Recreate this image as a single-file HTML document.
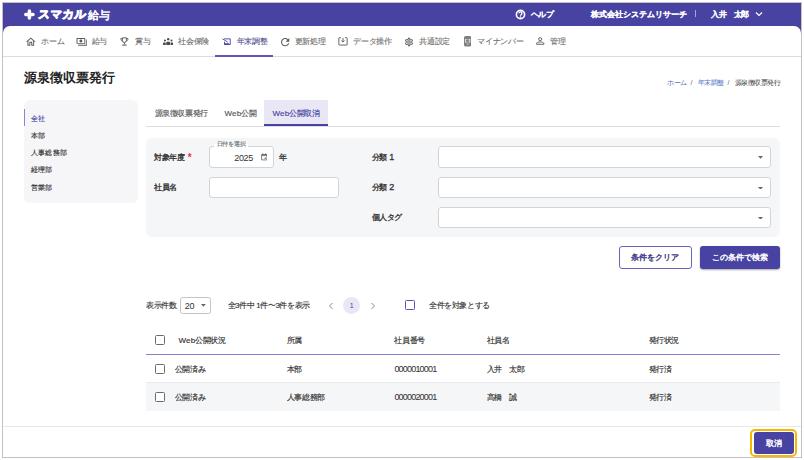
<!DOCTYPE html>
<html lang="ja">
<head>
<meta charset="utf-8">
<style>
*{box-sizing:border-box;margin:0;padding:0}
html,body{width:804px;height:460px;overflow:hidden;background:#fff}
body{font-family:"Liberation Sans",sans-serif;color:#333;position:relative}
.a{position:absolute;white-space:nowrap}
#frame{position:absolute;left:2px;top:2px;width:800px;height:456px;border:1px solid #c2c2c0;background:#4842a2;overflow:hidden}
#panel{position:absolute;left:3px;top:26px;width:798px;height:431px;background:#fff;border-radius:7px 7px 0 0}
.hdr{color:#fff;font-size:8px;font-weight:bold;line-height:12px;-webkit-text-stroke:0.25px #fff;letter-spacing:-0.4px}
.nav{font-size:8px;color:#707070;line-height:10px;-webkit-text-stroke:0.12px #707070;letter-spacing:-0.2px}
.ico{position:absolute}
.bc{top:78px;font-size:7px;line-height:9px;letter-spacing:-0.45px}
.t{font-size:8px;line-height:10px;color:#333;-webkit-text-stroke-width:0.15px;letter-spacing:-0.4px}
.sb{font-size:7px;letter-spacing:0.2px}
.b{-webkit-text-stroke-width:0.32px}
.box{position:absolute;background:#fff;border:1px solid #d3d4d7;border-radius:3px}
.cb{position:absolute;width:10px;height:10px;border:1.5px solid #6b6b6b;border-radius:1.5px;background:#fff}
.arr{position:absolute;width:0;height:0;border-left:2.6px solid transparent;border-right:2.6px solid transparent;border-top:2.8px solid #666}
</style>
</head>
<body>
<div id="frame"></div>
<div id="panel"></div>

<!-- ===== header ===== -->
<svg class="ico" style="left:24px;top:8.6px" width="11" height="11" viewBox="0 0 11 11"><path d="M5.4 1.9v7.2M1.8 5.5h7.2" stroke="#fff" stroke-width="3.5" stroke-linecap="round"/></svg>
<div class="a hdr" style="left:38px;top:5px;font-size:11.5px;font-weight:bold;line-height:18px;-webkit-text-stroke:0.9px #fff;transform:skewX(-6deg);letter-spacing:0.3px">スマカル</div>
<div class="a hdr" style="left:88px;top:6px;font-size:11px;font-weight:normal;-webkit-text-stroke:0.6px #fff;line-height:18px">給与</div>

<svg class="ico" style="left:515px;top:9px" width="11" height="11" viewBox="0 0 11 11"><circle cx="5.5" cy="5.5" r="4.1" fill="none" stroke="#fff" stroke-width="1.6"/><path d="M4 4.4a1.5 1.5 0 1 1 2.3 1.2c-.5.3-.8.6-.8 1.1" fill="none" stroke="#fff" stroke-width="1.3"/><circle cx="5.5" cy="8.1" r=".75" fill="#fff"/></svg>
<div class="a hdr" style="left:531px;top:9px;letter-spacing:-0.6px;font-weight:normal;-webkit-text-stroke:0.5px #fff">ヘルプ</div>
<div class="a hdr" style="left:591px;top:9px;letter-spacing:0;font-weight:normal;-webkit-text-stroke:0.6px #fff">株式会社システムリサーチ</div>
<div class="a" style="left:694.5px;top:10px;width:1.5px;height:7.4px;background:#a9a4d8"></div>
<div class="a hdr" style="left:711px;top:9px;font-weight:normal;-webkit-text-stroke:0.55px #fff">入井</div><div class="a hdr" style="left:733.5px;top:9px;font-weight:normal;-webkit-text-stroke:0.55px #fff">太郎</div>
<svg class="ico" style="left:755px;top:11px" width="8" height="6" viewBox="0 0 8 6"><path d="M1 1.5l3 3 3-3" fill="none" stroke="#fff" stroke-width="1.2"/></svg>

<!-- ===== nav ===== -->
<div class="a" style="left:3px;top:56px;width:798px;height:1px;background:#dcdcdc"></div>
<div class="a" style="left:215px;top:55px;width:58px;height:2px;background:#5e57b8"></div>

<svg class="ico" style="left:26.3px;top:36.5px" width="9.6" height="9.6" viewBox="2 2 20 20"><path fill="#5a5a5a" d="M12 5.69l5 4.5V18h-2v-6H9v6H7v-7.81l5-4.5M12 3L2 12h3v8h6v-6h2v6h6v-8h3L12 3z"/></svg>
<svg class="ico" style="left:75.5px;top:35.8px" width="11.8" height="11.8" viewBox="0 0 24 24"><path fill="#5a5a5a" d="M19 14V6c0-1.1-.9-2-2-2H3c-1.1 0-2 .9-2 2v8c0 1.1.9 2 2 2h14c1.1 0 2-.9 2-2zm-2 0H3V6h14v8zm-7-7c-1.66 0-3 1.34-3 3s1.34 3 3 3 3-1.34 3-3-1.34-3-3-3zm13 0v11c0 1.1-.9 2-2 2H4v-2h17V7h2z"/></svg>
<svg class="ico" style="left:120.3px;top:36.8px" width="8.8" height="9" viewBox="0 0 18 18"><g fill="none" stroke="#5a5a5a" stroke-width="1.9"><path d="M5 1.5h8v5.5a4 4 0 0 1-8 0z"/><path d="M5 3H1.8v1.5c0 1.8 1.4 3.3 3.4 3.5M13 3h3.2v1.5c0 1.8-1.4 3.3-3.4 3.5"/><path d="M9 11v4"/></g><path d="M4.5 15.3h9v2.2h-9z" fill="#5a5a5a"/></svg>
<svg class="ico" style="left:162.8px;top:37.8px" width="10.4" height="7.2" viewBox="0 0 20 14"><g fill="#4a4a4a"><circle cx="10" cy="2.3" r="2.3"/><circle cx="3.6" cy="5" r="2"/><circle cx="16.4" cy="5" r="2"/><path d="M6.3 14V9.2c0-1.1.7-1.9 1.8-1.9h3.8c1.1 0 1.8.8 1.8 1.9V14z"/><path d="M0 14v-3.6c0-1 .6-1.6 1.6-1.6h3.6v5.2zM20 14v-3.6c0-1-.6-1.6-1.6-1.6h-3.6v5.2z"/></g></svg>
<svg class="ico" style="left:221.5px;top:37.8px" width="9" height="7" viewBox="0 0 36 28"><g fill="none" stroke="#4842a2" stroke-width="3.6"><path d="M8 3.5h25v23H10V15"/><path d="M2 3.5l21 13"/></g><path d="M9 21h20v6H9z" fill="#4842a2"/></svg>
<svg class="ico" style="left:279.8px;top:36.5px" width="10.3" height="10.3" viewBox="2 2 20 20"><path fill="#5a5a5a" d="M17.65 6.35C16.2 4.9 14.21 4 12 4c-4.42 0-7.99 3.58-7.99 8s3.57 8 7.99 8c3.73 0 6.84-2.55 7.73-6h-2.08c-.82 2.33-3.04 4-5.65 4-3.31 0-6-2.69-6-6s2.69-6 6-6c1.66 0 3.14.69 4.22 1.78L13 11h7V4l-2.35 2.35z"/></svg>
<svg class="ico" style="left:338px;top:37px" width="10" height="8.8" viewBox="0 0 20 18"><g fill="none" stroke="#5a5a5a" stroke-width="1.9"><path d="M6 1.5H2.2c-.4 0-.7.3-.7.7v13.6c0 .4.3.7.7.7h15.6c.4 0 .7-.3.7-.7V2.2c0-.4-.3-.7-.7-.7H14"/><path d="M10 2v8M6.8 7.2L10 10.4l3.2-3.2"/></g></svg>
<svg class="ico" style="left:404.2px;top:36.5px" width="10" height="10" viewBox="0 0 24 24"><path fill="#5a5a5a" d="M19.43 12.98c.04-.32.07-.64.07-.98 0-.34-.03-.66-.07-.98l2.11-1.65c.19-.15.24-.42.12-.64l-2-3.46c-.09-.16-.26-.25-.44-.25-.06 0-.12.01-.17.03l-2.49 1c-.52-.4-1.08-.73-1.69-.98l-.38-2.65C14.46 2.18 14.25 2 14 2h-4c-.25 0-.46.18-.49.42l-.38 2.65c-.61.25-1.17.59-1.69.98l-2.49-1c-.06-.02-.12-.03-.18-.03-.17 0-.34.09-.43.25l-2 3.46c-.13.22-.07.49.12.64l2.11 1.65c-.04.32-.07.65-.07.98 0 .33.03.66.07.98l-2.11 1.65c-.19.15-.24.42-.12.64l2 3.46c.09.16.26.25.44.25.06 0 .12-.01.17-.03l2.49-1c.52.4 1.08.73 1.69.98l.38 2.65c.03.24.24.42.49.42h4c.25 0 .46-.18.49-.42l.38-2.65c.61-.25 1.17-.59 1.69-.98l2.49 1c.06.02.12.03.18.03.17 0 .34-.09.43-.25l2-3.46c.12-.22.07-.49-.12-.64l-2.11-1.65zm-1.98-1.71c.04.31.05.52.05.73 0 .21-.02.43-.05.73l-.14 1.13.89.7 1.08.84-.7 1.21-1.27-.51-1.04-.42-.9.68c-.43.32-.84.56-1.25.73l-1.06.43-.16 1.13-.2 1.35h-1.4l-.19-1.35-.16-1.13-1.06-.43c-.43-.18-.83-.41-1.23-.71l-.91-.7-1.06.43-1.27.51-.7-1.21 1.08-.84.89-.7-.14-1.13c-.03-.31-.05-.54-.05-.74s.02-.43.05-.73l.14-1.13-.89-.7-1.08-.84.7-1.21 1.27.51 1.04.42.9-.68c.43-.32.84-.56 1.25-.73l1.06-.43.16-1.13.2-1.35h1.39l.19 1.35.16 1.13 1.06.43c.43.18.83.41 1.23.71l.91.7 1.06-.43 1.27-.51.7 1.21-1.07.85-.89.7.14 1.13zM12 8c-2.21 0-4 1.79-4 4s1.79 4 4 4 4-1.79 4-4-1.79-4-4-4zm0 6c-1.1 0-2-.9-2-2s.9-2 2-2 2 .9 2 2-.9 2-2 2z"/></svg>
<svg class="ico" style="left:463.8px;top:36px" width="7.4" height="10.5" viewBox="0 0 14 20"><rect x="0" y="0" width="14" height="20" rx="3" fill="#808080"/><path d="M2.2 5.5h3.2v1.6H3.8v3.8h1.6v1.6H2.2zM11.8 5.5H8.6v1.6h1.6v3.8H8.6v1.6h3.2z" fill="#f0f0f0"/><path d="M5.4 7.1h3.2v3.8H5.4z" fill="#dcdcdc"/><path d="M7 7v4M5 9h4" stroke="#6a6a6a" stroke-width="1.3"/><rect x="5" y="14.2" width="4" height="1.6" rx=".8" fill="#eaeaea"/></svg>
<svg class="ico" style="left:536.3px;top:37.2px" width="8.4" height="8" viewBox="0 0 16 15"><g fill="none" stroke="#5a5a5a" stroke-width="1.8"><circle cx="8" cy="4" r="2.9"/><path d="M1 13.7v-1.2c0-2.2 3.7-3.2 7-3.2s7 1 7 3.2v1.2z"/></g></svg>
<div class="a nav" style="left:41px;top:36.6px">ホーム</div>
<div class="a nav" style="left:91.5px;top:36.6px">給与</div>
<div class="a nav" style="left:135px;top:36.6px">賞与</div>
<div class="a nav" style="left:178px;top:36.6px">社会保険</div>
<div class="a nav" style="left:236.5px;top:36.6px;color:#4842a2">年末調整</div>
<div class="a nav" style="left:294.5px;top:36.6px">更新処理</div>
<div class="a nav" style="left:353px;top:36.6px">データ操作</div>
<div class="a nav" style="left:419px;top:36.6px">共通設定</div>
<div class="a nav" style="left:477px;top:36.6px">マイナンバー</div>
<div class="a nav" style="left:550px;top:36.6px">管理</div>

<!-- ===== title / breadcrumb ===== -->
<div class="a" style="left:24px;top:70px;font-size:13px;font-weight:bold;line-height:16px;color:#222">源泉徴収票発行</div>
<div class="a bc" style="left:667px;color:#4f6fc4">ホーム</div>
<div class="a bc" style="left:690.5px;color:#666">/</div>
<div class="a bc" style="left:697.5px;color:#4f6fc4">年末調整</div>
<div class="a bc" style="left:727.5px;color:#666">/</div>
<div class="a bc" style="left:734.5px;color:#333">源泉徴収票発行</div>

<!-- ===== sidebar ===== -->
<div class="a" style="left:24px;top:100px;width:113.5px;height:103px;background:#f6f6f9;border-radius:6px"></div>
<div class="a" style="left:24px;top:108.5px;width:1.3px;height:17.3px;background:#8b85cc"></div>
<div class="a t sb" style="left:31px;top:113.5px;color:#4842a2">全社</div>
<div class="a t sb" style="left:31px;top:130.5px">本部</div>
<div class="a t sb" style="left:31px;top:147.5px">人事総務部</div>
<div class="a t sb" style="left:31px;top:164.5px">経理部</div>
<div class="a t sb" style="left:31px;top:182.5px">営業部</div>

<!-- ===== tabs ===== -->
<div class="a" style="left:146px;top:126px;width:634px;height:1px;background:#dcdcdc"></div>
<div class="a" style="left:264px;top:100px;width:63.5px;height:26px;background:#e9e7f6"></div>
<div class="a" style="left:264px;top:124.4px;width:63.5px;height:1.8px;background:#4842a2"></div>
<div class="a t" style="left:154.5px;top:109.0px;color:#555">源泉徴収票発行</div>
<div class="a t" style="left:224.5px;top:109.0px;color:#555"><span style="letter-spacing:0.15px">Web</span>公開</div>
<div class="a t" style="left:272.5px;top:109.0px;color:#4842a2"><span style="letter-spacing:0.15px">Web</span>公開取消</div>

<!-- ===== form panel ===== -->
<div class="a" style="left:146px;top:137.5px;width:634px;height:99px;background:#f5f6f8;border-radius:6px"></div>
<div class="a t b" style="left:154px;top:152.5px">対象年度</div><div class="a" style="left:187.8px;top:153px;font-size:10px;line-height:10px;color:#e53935;font-weight:bold">*</div>
<div class="box" style="left:209px;top:146px;width:64.5px;height:21.5px"></div>
<div class="a" style="left:214px;top:144px;height:4px;width:34px;background:#fff"></div>
<div class="a" style="left:216.5px;top:140px;font-size:6px;line-height:9px;color:#666;letter-spacing:-0.1px;-webkit-text-stroke-width:0.1px">日付を選択</div>
<div class="a" style="left:234.3px;top:152.5px;font-size:9px;line-height:10px;color:#333;letter-spacing:-0.35px">2025</div>
<svg class="ico" style="left:260.5px;top:153px" width="6.5" height="7.5" viewBox="0 0 13 15"><path d="M1.2 3.2h10.6v10.6H1.2z" fill="none" stroke="#666" stroke-width="1.6"/><path d="M1 3h11v2.6H1z" fill="#666"/><path d="M3.6 .5v3M9.4 .5v3" stroke="#666" stroke-width="1.6"/><rect x="7.2" y="9" width="2.6" height="2.6" fill="#666"/></svg>
<div class="a t" style="left:279px;top:152.5px;-webkit-text-stroke-width:0.3px">年</div>
<div class="a t b" style="left:154px;top:182.5px">社員名</div>
<div class="box" style="left:209px;top:176.5px;width:129.5px;height:21.5px"></div>

<div class="a t b" style="left:371.5px;top:151.5px">分類<span style="font-size:9px;margin-left:2.6px;letter-spacing:0">1</span></div>
<div class="a t b" style="left:371.5px;top:182px">分類<span style="font-size:9px;margin-left:2.6px;letter-spacing:0">2</span></div>
<div class="a t b" style="left:371.5px;top:213.0px">個人タグ</div>
<div class="box" style="left:437.5px;top:146px;width:333px;height:21.5px"></div>
<div class="box" style="left:437.5px;top:176.5px;width:333px;height:21.5px"></div>
<div class="box" style="left:437.5px;top:206.5px;width:333px;height:21.5px"></div>
<svg class="ico" style="left:757.5px;top:156px" width="5" height="2.8" viewBox="0 0 10 5.6"><path d="M0 0h10L5 5.6z" fill="#666"/></svg>
<svg class="ico" style="left:757.5px;top:186.5px" width="5" height="2.8" viewBox="0 0 10 5.6"><path d="M0 0h10L5 5.6z" fill="#666"/></svg>
<svg class="ico" style="left:757.5px;top:216.5px" width="5" height="2.8" viewBox="0 0 10 5.6"><path d="M0 0h10L5 5.6z" fill="#666"/></svg>

<!-- ===== buttons ===== -->
<div class="a" style="left:619px;top:245.5px;width:72.5px;height:23px;border:1px solid #6a63b8;border-radius:3px;background:#fff"></div>
<div class="a t" style="left:619px;top:253px;width:72.5px;text-align:center;color:#3f3a8a;letter-spacing:0;-webkit-text-stroke-width:0.4px">条件をクリア</div>
<div class="a" style="left:700px;top:245.5px;width:80px;height:23px;border-radius:3px;background:#4842a2;box-shadow:0 1px 2px rgba(0,0,0,.35)"></div>
<div class="a t" style="left:700px;top:253px;width:80px;text-align:center;color:#fff;letter-spacing:0;-webkit-text-stroke-width:0.4px">この条件で検索</div>

<!-- ===== pagination ===== -->
<div class="a t" style="left:146px;top:301.0px">表示件数</div>
<div class="box" style="left:180px;top:297px;width:31px;height:16.5px;border-radius:2.5px;border-color:#c4c4c8"></div>
<div class="a" style="left:184.7px;top:300.5px;font-size:9px;line-height:10px;color:#333;letter-spacing:-0.3px">20</div>
<svg class="ico" style="left:201.3px;top:304.2px" width="4.8" height="2.7" viewBox="0 0 10 5.6"><path d="M0 0h10L5 5.6z" fill="#666"/></svg>
<div class="a t" style="left:227.5px;top:301.0px">全3件中 1件〜3件を表示</div>
<svg class="ico" style="left:328px;top:301.5px" width="6" height="8" viewBox="0 0 6 8"><path d="M4.5 1L1.5 4l3 3" fill="none" stroke="#888" stroke-width="1"/></svg>
<div class="a" style="left:343px;top:296.7px;width:17.4px;height:17.4px;border-radius:50%;background:#e9e7f6"></div>
<div class="a" style="left:343px;top:300.5px;width:17.4px;text-align:center;font-size:7px;line-height:10px;color:#4842a2">1</div>
<svg class="ico" style="left:370px;top:301.5px" width="6" height="8" viewBox="0 0 6 8"><path d="M1.5 1l3 3-3 3" fill="none" stroke="#888" stroke-width="1"/></svg>
<div class="cb" style="left:404.5px;top:300.3px;width:10.5px;height:10px;border-color:#5a52b0;border-width:1.6px"></div>
<div class="a t" style="left:429px;top:301.0px">全件を対象とする</div>

<!-- ===== table ===== -->
<div class="cb" style="left:154.5px;top:335.3px"></div>
<div class="a t" style="left:178.5px;top:336.0px"><span style="letter-spacing:0.15px">Web</span>公開状況</div>
<div class="a t" style="left:286.8px;top:336.0px">所属</div>
<div class="a t" style="left:394.4px;top:336.0px">社員番号</div>
<div class="a t" style="left:486.5px;top:336.0px">社員名</div>
<div class="a t" style="left:648.7px;top:336.0px">発行状況</div>
<div class="a" style="left:146px;top:354px;width:634px;height:1px;background:#8882d2"></div>

<div class="cb" style="left:154.5px;top:364px"></div>
<div class="a t" style="left:174.8px;top:365.0px">公開済み</div>
<div class="a t" style="left:286.8px;top:365.0px">本部</div>
<div class="a t" style="left:394.4px;top:364px;letter-spacing:-0.8px;-webkit-text-stroke-width:0.05px;font-size:9px">0000010001</div>
<div class="a t" style="left:486.5px;top:365.0px">入井　太郎</div>
<div class="a t" style="left:648.7px;top:365.0px">発行済</div>
<div class="a" style="left:146px;top:382px;width:634px;height:29px;background:#f5f6f8;border-top:1px solid #ebebed"></div>
<div class="cb" style="left:154.5px;top:392.2px"></div>
<div class="a t" style="left:174.8px;top:393.0px">公開済み</div>
<div class="a t" style="left:286.8px;top:393.0px">人事総務部</div>
<div class="a t" style="left:394.4px;top:392px;letter-spacing:-0.8px;-webkit-text-stroke-width:0.05px;font-size:9px">0000020001</div>
<div class="a t" style="left:486.5px;top:393.0px">高橋　誠</div>
<div class="a t" style="left:648.7px;top:393.0px">発行済</div>

<!-- ===== footer ===== -->
<div class="a" style="left:3px;top:426px;width:798px;height:1px;background:#e8e8e8"></div>
<div class="a" style="left:750px;top:429px;width:46.5px;height:27.5px;border:2px solid #f7b600;border-radius:5px"></div>
<div class="a" style="left:753.5px;top:432px;width:40px;height:22px;border-radius:3px;background:#4842a2"></div>
<div class="a t" style="left:753.5px;top:439px;width:40px;text-align:center;color:#fff;letter-spacing:0;-webkit-text-stroke-width:0.4px">取消</div>
</body>
</html>
